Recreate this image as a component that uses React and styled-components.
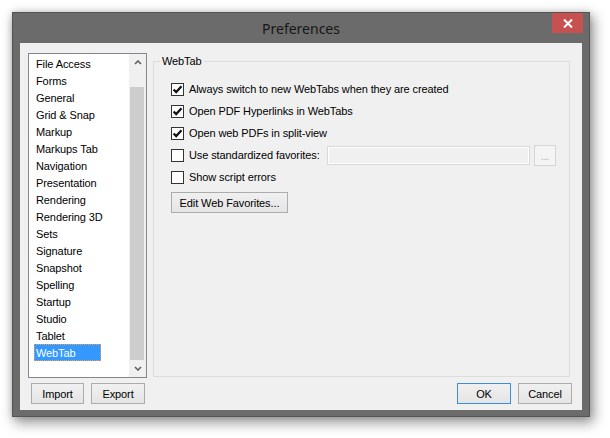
import React from "react";
import styled, { createGlobalStyle } from "styled-components";

const GlobalStyle = createGlobalStyle`
  html, body {
    margin: 0;
    padding: 0;
    background: #fff;
  }
  body {
    font-family: "Liberation Sans", Arial, sans-serif;
    font-size: 11px;
    letter-spacing: -0.1px;
    color: #000;
  }
`;

const Page = styled.div`
  width: 610px;
  height: 438px;
  padding: 12px 0 0 12px;
  box-sizing: border-box;
`;

const Window = styled.div`
  width: 578px;
  height: 405px;
  box-sizing: border-box;
  background: #6b6b6b;
  border: 1px solid #545454;
  box-shadow: 3px 5px 12px 1px rgba(0, 0, 0, 0.4), 0 0 6px rgba(0, 0, 0, 0.15);
  display: flex;
  flex-direction: column;
  padding: 0 7px 6px 7px;
`;

const TitleBar = styled.div`
  height: 30px;
  display: grid;
  grid-template-columns: 1fr auto 1fr;
  align-items: center;
`;

const Title = styled.div`
  grid-column: 2;
  font-family: "Noto Sans", "Open Sans", sans-serif;
  font-size: 14px;
  letter-spacing: 0;
  color: #161616;
  padding-top: 1px;
`;

const CloseButton = styled.div`
  grid-column: 3;
  justify-self: end;
  align-self: start;
  width: 31px;
  height: 20px;
  margin-right: -1px;
  background: #c75050;
  display: flex;
  align-items: center;
  justify-content: center;
`;

const Client = styled.div`
  flex: 1;
  background: #f0f0f0;
  display: grid;
  grid-template-columns: 119px 1fr;
  grid-template-rows: 1fr auto;
  padding: 10px 10px 6px 8px;
`;

const ListBox = styled.div`
  border: 1px solid #828790;
  background: #fff;
  display: flex;
  overflow: hidden;
`;

const Items = styled.div`
  flex: 1;
  padding-top: 1px;
`;

const Item = styled.div`
  height: 17px;
  line-height: 19px;
  white-space: nowrap;
  padding-left: ${(p) => (p.$selected ? "2px" : "7px")};
  margin-left: ${(p) => (p.$selected ? "5px" : "0")};
  width: ${(p) => (p.$selected ? "67px" : "auto")};
  box-sizing: border-box;
  background: ${(p) => (p.$selected ? "#3399ff" : "transparent")};
  color: ${(p) => (p.$selected ? "#fff" : "#000")};
  outline: ${(p) => (p.$selected ? "1px dotted #f2a04e" : "none")};
  outline-offset: -1px;
`;

const ScrollBar = styled.div`
  width: 17px;
  background: #f0f0f0;
  display: flex;
  flex-direction: column;
`;

const ScrollArrow = styled.div`
  height: 17px;
  display: flex;
  align-items: center;
  justify-content: center;
`;

const ScrollTrack = styled.div`
  flex: 1;
  display: flex;
  flex-direction: column;
  padding: 16px 2px 0 1px;
`;

const Thumb = styled.div`
  flex: 1;
  background: #cdcdcd;
`;

const LeftButtons = styled.div`
  display: flex;
  gap: 7px;
  margin-top: 5px;
  padding-left: 3px;
`;

const RightButtons = styled.div`
  display: flex;
  justify-content: flex-end;
  gap: 7px;
  margin-top: 5px;
`;

const Button = styled.button`
  width: ${(p) => p.$w}px;
  height: 21px;
  padding: 0;
  font-family: inherit;
  font-size: 11px;
  letter-spacing: -0.1px;
  color: #000;
  background: linear-gradient(#f0f0f0, #e5e5e5);
  border: 1px solid ${(p) => (p.$default ? "#3c8ddb" : "#acacac")};
  box-sizing: border-box;
  margin-top: ${(p) => p.$mt || 0}px;
`;

const Group = styled.fieldset`
  margin: 2px 2px 1px 6px;
  padding: 0;
  border: 1px solid #dcdcdc;
  min-width: 0;
`;

const Legend = styled.legend`
  margin-left: 6px;
  padding: 0 2px;
  line-height: 13px;
`;

const GroupBody = styled.div`
  padding: 10px 0 0 17px;
  display: flex;
  flex-direction: column;
  align-items: flex-start;
`;

const Row = styled.div`
  height: 22px;
  display: flex;
  align-items: center;
`;

const Box = styled.span`
  width: 13px;
  height: 13px;
  box-sizing: border-box;
  border: 1px solid #333;
  background: #fff;
  display: flex;
  align-items: center;
  justify-content: center;
  flex: none;
`;

const Label = styled.span`
  margin-left: 5px;
  white-space: nowrap;
  width: ${(p) => (p.$w ? `${p.$w}px` : "auto")};
`;

const TextField = styled.div`
  width: 203px;
  height: 19px;
  box-sizing: border-box;
  border: 1px solid #d9d9d9;
  box-shadow: inset 0 0 0 1px #fff;
  background: #f0f0f0;
`;

const DotsButton = styled.div`
  width: 22px;
  height: 21px;
  margin-left: 4px;
  box-sizing: border-box;
  border: 1px solid #d5d5d5;
  background: #f4f4f4;
  color: #a8a8a8;
  font-size: 10px;
  display: flex;
  align-items: center;
  justify-content: center;
  padding-top: 2px;
`;

const Check = ({ checked }) => (
  <Box>
    {checked && (
      <svg width="11" height="11" viewBox="0 0 11 11">
        <path d="M1.6 5.4 L4.2 8.1 L9.5 2.3" fill="none" stroke="#111" strokeWidth="2.2" />
      </svg>
    )}
  </Box>
);

const Chevron = ({ down }) => (
  <svg width="8" height="5" viewBox="0 0 8 5">
    <path
      d={down ? "M1 1 L4 4 L7 1" : "M1 4 L4 1 L7 4"}
      fill="none"
      stroke="#606060"
      strokeWidth="1.6"
    />
  </svg>
);

const items = [
  "File Access",
  "Forms",
  "General",
  "Grid & Snap",
  "Markup",
  "Markups Tab",
  "Navigation",
  "Presentation",
  "Rendering",
  "Rendering 3D",
  "Sets",
  "Signature",
  "Snapshot",
  "Spelling",
  "Startup",
  "Studio",
  "Tablet",
  "WebTab",
];

export default function App() {
  return (
    <Page>
      <GlobalStyle />
      <Window>
        <TitleBar>
          <Title>Preferences</Title>
          <CloseButton>
            <svg width="10" height="9" viewBox="0 0 10 9">
              <path d="M1 0.5 L9 8.5 M9 0.5 L1 8.5" stroke="#fff" strokeWidth="2" />
            </svg>
          </CloseButton>
        </TitleBar>
        <Client>
          <ListBox>
            <Items>
              {items.map((it) => (
                <Item key={it} $selected={it === "WebTab"}>
                  {it}
                </Item>
              ))}
            </Items>
            <ScrollBar>
              <ScrollArrow>
                <Chevron />
              </ScrollArrow>
              <ScrollTrack>
                <Thumb />
              </ScrollTrack>
              <ScrollArrow>
                <Chevron down />
              </ScrollArrow>
            </ScrollBar>
          </ListBox>
          <Group>
            <Legend>WebTab</Legend>
            <GroupBody>
              <Row>
                <Check checked />
                <Label>Always switch to new WebTabs when they are created</Label>
              </Row>
              <Row>
                <Check checked />
                <Label>Open PDF Hyperlinks in WebTabs</Label>
              </Row>
              <Row>
                <Check checked />
                <Label>Open web PDFs in split-view</Label>
              </Row>
              <Row>
                <Check />
                <Label $w={138}>Use standardized favorites:</Label>
                <TextField />
                <DotsButton>...</DotsButton>
              </Row>
              <Row>
                <Check />
                <Label>Show script errors</Label>
              </Row>
              <Button $w={117} $mt={4}>Edit Web Favorites...</Button>
            </GroupBody>
          </Group>
          <LeftButtons>
            <Button $w={53}>Import</Button>
            <Button $w={54}>Export</Button>
          </LeftButtons>
          <RightButtons>
            <Button $w={54} $default>OK</Button>
            <Button $w={54}>Cancel</Button>
          </RightButtons>
        </Client>
      </Window>
    </Page>
  );
}
